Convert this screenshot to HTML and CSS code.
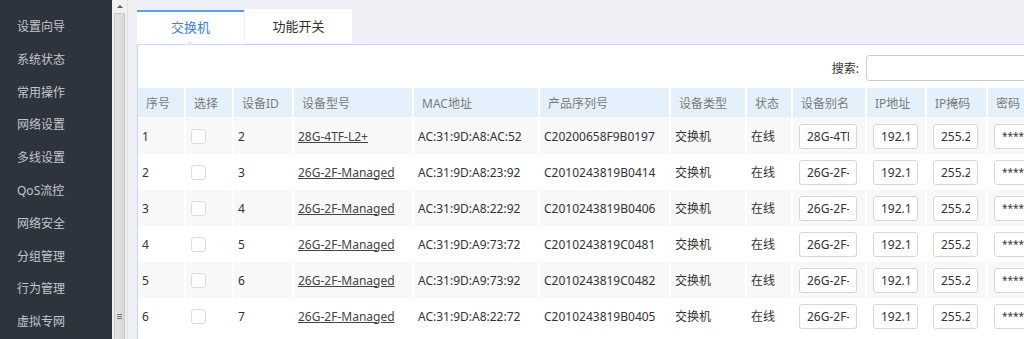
FILE: index.html
```html
<!DOCTYPE html>
<html lang="zh-CN">
<head>
  <meta charset="UTF-8">
  <title>交换机管理</title>
  <link rel="stylesheet" href="styles.css">
</head>
<body>

  <div class="sidebar">
    <div class="nav-item">设置向导</div>
    <div class="nav-item">系统状态</div>
    <div class="nav-item">常用操作</div>
    <div class="nav-item">网络设置</div>
    <div class="nav-item">多线设置</div>
    <div class="nav-item">QoS流控</div>
    <div class="nav-item">网络安全</div>
    <div class="nav-item">分组管理</div>
    <div class="nav-item">行为管理</div>
    <div class="nav-item">虚拟专网</div>
  </div>

  <!-- sidebar scrollbar -->
  <div class="scrollbar">
    <div class="scroll-up"><span class="arrow"></span></div>
    <div class="scroll-thumb">
      <div class="grip"><i></i><i></i><i></i></div>
    </div>
  </div>

  <div class="main">
    <div class="tabs">
      <div class="tab active">交换机</div>
      <div class="tab">功能开关</div>
    </div>

    <div class="panel">
      <div class="search-row">
        <label for="search">搜索:</label>
        <input type="text" id="search">
      </div>

      <table class="device-table">
        <thead>
          <tr>
            <th class="c-no">序号</th>
            <th class="c-sel">选择</th>
            <th class="c-id">设备ID</th>
            <th class="c-model">设备型号</th>
            <th class="c-mac">MAC地址</th>
            <th class="c-sn">产品序列号</th>
            <th class="c-type">设备类型</th>
            <th class="c-state">状态</th>
            <th class="c-alias">设备别名</th>
            <th class="c-ip">IP地址</th>
            <th class="c-mask">IP掩码</th>
            <th class="c-pw">密码</th>
          </tr>
        </thead>
        <tbody>
          <tr>
            <td>1</td>
            <td><span class="check"></span></td>
            <td>2</td>
            <td><a href="#">28G-4TF-L2+</a></td>
            <td>AC:31:9D:A8:AC:52</td>
            <td>C20200658F9B0197</td>
            <td>交换机</td>
            <td>在线</td>
            <td><input class="in-alias" value="28G-4TF-L2+"></td>
            <td><input class="in-ip" value="192.168.1.2"></td>
            <td><input class="in-mask" value="255.255.255.0"></td>
            <td><input class="in-pw" value="********"></td>
          </tr>
          <tr>
            <td>2</td>
            <td><span class="check"></span></td>
            <td>3</td>
            <td><a href="#">26G-2F-Managed</a></td>
            <td>AC:31:9D:A8:23:92</td>
            <td>C2010243819B0414</td>
            <td>交换机</td>
            <td>在线</td>
            <td><input class="in-alias" value="26G-2F-Managed"></td>
            <td><input class="in-ip" value="192.168.1.3"></td>
            <td><input class="in-mask" value="255.255.255.0"></td>
            <td><input class="in-pw" value="********"></td>
          </tr>
          <tr>
            <td>3</td>
            <td><span class="check"></span></td>
            <td>4</td>
            <td><a href="#">26G-2F-Managed</a></td>
            <td>AC:31:9D:A8:22:92</td>
            <td>C2010243819B0406</td>
            <td>交换机</td>
            <td>在线</td>
            <td><input class="in-alias" value="26G-2F-Managed"></td>
            <td><input class="in-ip" value="192.168.1.4"></td>
            <td><input class="in-mask" value="255.255.255.0"></td>
            <td><input class="in-pw" value="********"></td>
          </tr>
          <tr>
            <td>4</td>
            <td><span class="check"></span></td>
            <td>5</td>
            <td><a href="#">26G-2F-Managed</a></td>
            <td>AC:31:9D:A9:73:72</td>
            <td>C2010243819C0481</td>
            <td>交换机</td>
            <td>在线</td>
            <td><input class="in-alias" value="26G-2F-Managed"></td>
            <td><input class="in-ip" value="192.168.1.5"></td>
            <td><input class="in-mask" value="255.255.255.0"></td>
            <td><input class="in-pw" value="********"></td>
          </tr>
          <tr>
            <td>5</td>
            <td><span class="check"></span></td>
            <td>6</td>
            <td><a href="#">26G-2F-Managed</a></td>
            <td>AC:31:9D:A9:73:92</td>
            <td>C2010243819C0482</td>
            <td>交换机</td>
            <td>在线</td>
            <td><input class="in-alias" value="26G-2F-Managed"></td>
            <td><input class="in-ip" value="192.168.1.6"></td>
            <td><input class="in-mask" value="255.255.255.0"></td>
            <td><input class="in-pw" value="********"></td>
          </tr>
          <tr>
            <td>6</td>
            <td><span class="check"></span></td>
            <td>7</td>
            <td><a href="#">26G-2F-Managed</a></td>
            <td>AC:31:9D:A8:22:72</td>
            <td>C2010243819B0405</td>
            <td>交换机</td>
            <td>在线</td>
            <td><input class="in-alias" value="26G-2F-Managed"></td>
            <td><input class="in-ip" value="192.168.1.7"></td>
            <td><input class="in-mask" value="255.255.255.0"></td>
            <td><input class="in-pw" value="********"></td>
          </tr>
        </tbody>
      </table>
    </div>
  </div>

</body>
</html>
```

FILE: styles.css
```css
body {
  margin: 0;
  height: 339px;
  overflow: hidden;
  display: flex;
  font-family: "Noto Sans", "Noto Sans CJK SC", sans-serif;
  font-size: 12px;
  color: #333;
  background-color: #eef0f5;
}

/* left menu */
.sidebar {
  width: 112px;
  flex-shrink: 0;
  background-color: #2e343d;
  padding-top: 11px;
  box-sizing: border-box;
}

.nav-item {
  height: 32.8px;
  line-height: 32px;
  padding-left: 17px;
  color: #c4c6c9;
  white-space: nowrap;
}

.scrollbar {
  width: 15px;
  flex-shrink: 0;
  background-color: #f0f0f0;
  display: flex;
  flex-direction: column;
  border-right: 1px solid #e2e2e2;
}

.scroll-up {
  height: 13px;
  display: flex;
  justify-content: center;
  align-items: center;
}

.arrow {
  width: 0;
  height: 0;
  border-left: 3px solid transparent;
  border-right: 3px solid transparent;
  border-bottom: 3px solid #555;
}

.scroll-thumb {
  flex: 1;
  margin: 0 2px;
  background: linear-gradient(to right, #e4e4e4, #d8d8d8);
  border: 1px solid #c8c8c8;
  border-bottom: none;
  display: flex;
  align-items: flex-end;
  justify-content: center;
  padding-bottom: 20px;
}

.grip i {
  display: block;
  width: 5px;
  height: 1px;
  margin-top: 1px;
  background-color: #777;
}

/* content area */
.main {
  flex: 1;
  padding: 9px 0 0 9px;
  overflow: hidden;
}

.tabs {
  display: flex;
  gap: 1px;
}

.tab {
  width: 107px;
  height: 34px;
  line-height: 34px;
  text-align: center;
  font-size: 13px;
  color: #333;
  background-color: #fff;
}

.tab.active {
  position: relative;
  height: 32px;
  line-height: 30px;
  margin-top: 1px;
  border-top: 2px solid #5d9fe6;
  color: #3a7fdb;
}

.tab.active::after {
  content: "";
  position: absolute;
  left: 48px;
  bottom: -1px;
  border-left: 5px solid transparent;
  border-right: 5px solid transparent;
  border-bottom: 4px solid #dfe6f5;
}

.panel {
  width: 940px;
  background-color: #fff;
  border-top: 1px solid #c9d6f3;
  border-left: 1px solid #c9d6f3;
  height: 400px;
}

.search-row {
  display: flex;
  justify-content: flex-end;
  align-items: center;
  gap: 7px;
  padding: 10px 12px 0 0;
  height: 26px;
  margin-bottom: 7px;
}

.search-row label {
  font-size: 12px;
  color: #333;
}

.search-row input {
  width: 200px;
  height: 26px;
  box-sizing: border-box;
  border: 1px solid #ccc;
  border-radius: 3px;
}

/* device table */
.device-table {
  border-collapse: separate;
  border-spacing: 0;
  table-layout: fixed;
  width: 920px;
}

.device-table th,
.device-table td {
  box-sizing: border-box;
  border-right: 2px solid #fff;
  text-align: left;
  white-space: nowrap;
  overflow: hidden;
}

.device-table th {
  height: 30px;
  padding: 0 0 0 8px;
  font-weight: normal;
  color: #7a7a7a;
  background-color: #e4f1fb;
  border-bottom: 1px solid #fff;
}

.device-table td {
  height: 36px;
  padding: 0 0 0 4px;
}

.device-table tbody tr:nth-child(odd) td {
  background-color: #f8f8f8;
}

.c-no { width: 48px; }
.c-sel { width: 48px; }
.c-id { width: 60px; }
.c-model { width: 120px; }
.c-mac { width: 126px; }
.c-sn { width: 131px; }
.c-type { width: 76px; }
.c-state { width: 46px; }
.c-alias { width: 74px; }
.c-ip { width: 60px; }
.c-mask { width: 61px; }
.c-pw { width: 70px; }

.device-table a {
  color: #444;
  text-decoration: underline;
}

.check {
  display: block;
  width: 15px;
  height: 15px;
  margin-left: 1px;
  box-sizing: border-box;
  border: 1px solid #dcdcdc;
  border-radius: 3px;
  background-color: #fff;
}

.device-table input {
  display: block;
  height: 25px;
  box-sizing: border-box;
  margin-left: 2px;
  padding: 0 7px;
  border: 1px solid #d6d6d6;
  border-radius: 3px;
  background-color: #fff;
  font-family: "Noto Sans", "Noto Sans CJK SC", sans-serif;
  font-size: 12px;
  color: #333;
}

.in-alias { width: 58px; }
.in-ip { width: 45px; }
.in-mask { width: 45px; }
.in-pw { width: 60px; font-size: 10px !important; }
```
